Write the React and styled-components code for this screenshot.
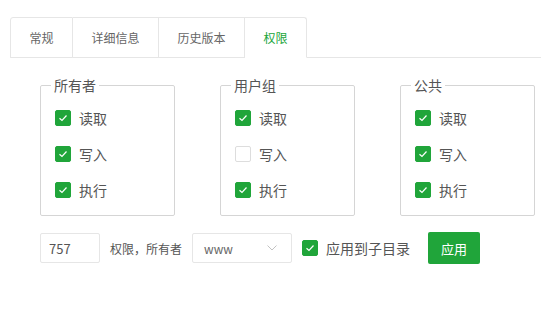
import React, { useState } from 'react';
import styled, { createGlobalStyle } from 'styled-components';

const GlobalStyle = createGlobalStyle`
  html, body {
    margin: 0;
    padding: 0;
    background: #fff;
    font-family: "Noto Sans CJK SC", "Noto Sans", sans-serif;
    color: #555;
  }
  * { box-sizing: border-box; }
`;

const Page = styled.div`
  padding: 17px 0 0 10px;
  width: 541px;
  height: 336px;
  overflow: hidden;
`;

const TabBar = styled.ul`
  display: flex;
  margin: 0;
  padding: 0;
  list-style: none;
  height: 41px;
  border-bottom: 1px solid #e6e6e6;
`;

const Tab = styled.li`
  height: 41px;
  padding: 0 18.5px;
  display: flex;
  align-items: center;
  font-size: 12px;
  color: ${p => (p.$active ? '#20a53a' : '#666')};
  background: #fff;
  border: 1px solid #e6e6e6;
  border-left: ${p => (p.$first ? '1px solid #e6e6e6' : 'none')};
  border-bottom: ${p => (p.$active ? '1px solid #fff' : '1px solid #e6e6e6')};
  border-radius: ${p => (p.$first ? '3px 0 0 0' : p.$last ? '0 3px 0 0' : '0')};
  cursor: pointer;
`;

const Body = styled.div`
  padding: 17px 0 0 30px;
`;

const Groups = styled.div`
  display: flex;
  gap: 45px;
`;

const Group = styled.fieldset`
  width: 135px;
  min-width: 0;
  margin: 0;
  padding: 5px 10px 7px 14px;
  border: 1px solid #d5d5d5;
  border-radius: 2px;
`;

const Legend = styled.legend`
  margin-left: -4px;
  padding: 0 3px;
  font-size: 14px;
  line-height: 20px;
  color: #555;
`;

const Row = styled.label`
  display: flex;
  align-items: center;
  gap: 8px;
  height: 36px;
  font-size: 14px;
  color: #555;
  cursor: pointer;
`;

const Box = styled.span`
  width: 16px;
  height: 16px;
  border-radius: 2px;
  flex-shrink: 0;
  display: flex;
  align-items: center;
  justify-content: center;
  background: ${p => (p.$on ? '#20a53a' : '#fff')};
  border: 1px solid ${p => (p.$on ? '#20a53a' : '#ddd')};
`;

const Check = ({ on, onClick }) => (
  <Box $on={on} onClick={onClick}>
    {on && (
      <svg width="10" height="10" viewBox="0 0 10 10">
        <path d="M1.5 5.2 L4 7.5 L8.5 2.5" fill="none" stroke="#fff" strokeWidth="1.2" />
      </svg>
    )}
  </Box>
);

const Footer = styled.div`
  display: flex;
  align-items: center;
  margin-top: 16px;
  height: 32px;
`;

const Field = styled.input`
  width: 60px;
  height: 30px;
  border: 1px solid #e6e6e6;
  border-radius: 2px;
  padding: 0 8px;
  font-family: inherit;
  font-size: 13px;
  color: #555;
  outline: none;
`;

const Hint = styled.span`
  margin: 0 10px 0 10px;
  font-size: 12px;
  color: #555;
`;

const Select = styled.div`
  width: 100px;
  height: 30px;
  border: 1px solid #e6e6e6;
  border-radius: 2px;
  display: flex;
  align-items: center;
  justify-content: space-between;
  padding: 0 14px 0 11px;
  font-size: 12px;
  color: #666;
`;

const SubDir = styled.label`
  display: flex;
  align-items: center;
  gap: 8px;
  margin-left: 10px;
  font-size: 14px;
  color: #555;
`;

const Apply = styled.button`
  margin-left: 18px;
  width: 52px;
  height: 32px;
  border: none;
  border-radius: 2px;
  background: #20a53a;
  color: #fff;
  font-family: inherit;
  font-size: 13px;
  cursor: pointer;
`;

const tabs = ['常规', '详细信息', '历史版本', '权限'];
const groups = [
  { name: '所有者', perms: [true, true, true] },
  { name: '用户组', perms: [true, false, true] },
  { name: '公共', perms: [true, true, true] },
];
const permNames = ['读取', '写入', '执行'];

export default function App() {
  const [state, setState] = useState(groups.map(g => g.perms));
  const [sub, setSub] = useState(true);

  const toggle = (gi, pi) =>
    setState(s => s.map((p, i) => (i === gi ? p.map((v, j) => (j === pi ? !v : v)) : p)));

  return (
    <Page>
      <GlobalStyle />
      <TabBar>
        {tabs.map((t, i) => (
          <Tab key={t} $active={i === 3} $first={i === 0} $last={i === tabs.length - 1}>
            {t}
          </Tab>
        ))}
      </TabBar>
      <Body>
        <Groups>
          {groups.map((g, gi) => (
            <Group key={g.name}>
              <Legend>{g.name}</Legend>
              {permNames.map((n, pi) => (
                <Row key={n}>
                  <Check on={state[gi][pi]} onClick={() => toggle(gi, pi)} />
                  {n}
                </Row>
              ))}
            </Group>
          ))}
        </Groups>
        <Footer>
          <Field defaultValue="757" />
          <Hint>权限，所有者</Hint>
          <Select>
            www
            <svg width="10" height="6" viewBox="0 0 10 6">
              <path d="M0.5 0.5 L5 5 L9.5 0.5" fill="none" stroke="#c2c2c2" strokeWidth="1" />
            </svg>
          </Select>
          <SubDir>
            <Check on={sub} onClick={() => setSub(!sub)} />
            应用到子目录
          </SubDir>
          <Apply>应用</Apply>
        </Footer>
      </Body>
    </Page>
  );
}
